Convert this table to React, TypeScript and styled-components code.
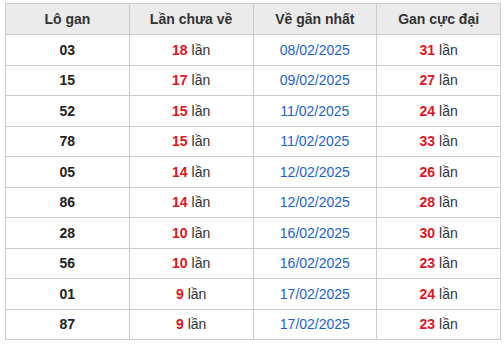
import React from "react";
import styled, { createGlobalStyle } from "styled-components";

interface GanRow {
  number: string;
  current: number;
  lastSeen: string;
  max: number;
}

const rows: GanRow[] = [
  { number: "03", current: 18, lastSeen: "08/02/2025", max: 31 },
  { number: "15", current: 17, lastSeen: "09/02/2025", max: 27 },
  { number: "52", current: 15, lastSeen: "11/02/2025", max: 24 },
  { number: "78", current: 15, lastSeen: "11/02/2025", max: 33 },
  { number: "05", current: 14, lastSeen: "12/02/2025", max: 26 },
  { number: "86", current: 14, lastSeen: "12/02/2025", max: 28 },
  { number: "28", current: 10, lastSeen: "16/02/2025", max: 30 },
  { number: "56", current: 10, lastSeen: "16/02/2025", max: 23 },
  { number: "01", current: 9, lastSeen: "17/02/2025", max: 24 },
  { number: "87", current: 9, lastSeen: "17/02/2025", max: 23 },
];

const GlobalStyle = createGlobalStyle`
  html, body {
    margin: 0;
    padding: 0;
    background: #fff;
  }
  body {
    font-family: "Liberation Sans", Arial, sans-serif;
  }
`;

const Page = styled.div`
  padding: 3px 3px 0 5px;
`;

const Table = styled.table`
  width: 496px;
  border-collapse: collapse;
  table-layout: fixed;
  font-size: 14px;
  color: #333;
`;

const HeadCell = styled.th`
  height: 30px;
  padding: 0;
  background: #ebebeb;
  border: 1px solid #ccc;
  font-weight: bold;
  text-align: center;
  color: #333;
`;

const Cell = styled.td`
  height: 29.5px;
  padding: 0;
  border: 1px solid #ccc;
  text-align: center;
`;

const NumberCell = styled(Cell)`
  font-weight: bold;
  color: #222;
`;

const DateCell = styled(Cell)`
  color: #1a62d0;
`;

const Count = styled.b`
  color: #e3141c;
`;

const Unit = styled.span`
  color: #333;
`;

const Times = ({ value }: { value: number }) => (
  <>
    <Count>{value}</Count> <Unit>lần</Unit>
  </>
);

const App = () => {
  return (
    <Page>
      <GlobalStyle />
      <Table>
        <thead>
          <tr>
            <HeadCell>Lô gan</HeadCell>
            <HeadCell>Lần chưa về</HeadCell>
            <HeadCell>Về gần nhất</HeadCell>
            <HeadCell>Gan cực đại</HeadCell>
          </tr>
        </thead>
        <tbody>
          {rows.map((row) => (
            <tr key={row.number}>
              <NumberCell>{row.number}</NumberCell>
              <Cell>
                <Times value={row.current} />
              </Cell>
              <DateCell>{row.lastSeen}</DateCell>
              <Cell>
                <Times value={row.max} />
              </Cell>
            </tr>
          ))}
        </tbody>
      </Table>
    </Page>
  );
};

export default App;
